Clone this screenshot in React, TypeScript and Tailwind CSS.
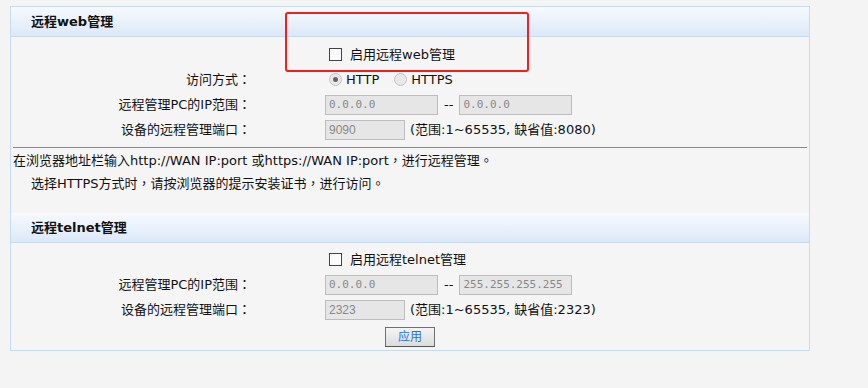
import type { ReactNode } from "react";

const FONT = "font-['DejaVu_Sans','Noto_Sans_CJK_SC',sans-serif]";
const CJK = "font-['Noto_Sans_CJK_TC',sans-serif]";

function Header({ title }: { title: string }) {
  return (
    <div className="flex h-[30px] items-center border-b border-[#c6daf0] bg-gradient-to-b from-[#f7fafe] to-[#dce8f8] pl-[20px]">
      <span className="text-[13px] font-bold text-[#111]">{title}</span>
    </div>
  );
}

// full-width punctuation, centred in its cell as in the original
function P({ c }: { c: string }) {
  return <span className={CJK}>{c}</span>;
}

function Row({ label, children }: { label?: string; children: ReactNode }) {
  return (
    <div className="flex h-[25px] items-center">
      <div className="w-[240px] text-right">
        {label && (
          <>
            {label}
            <P c="：" />
          </>
        )}
      </div>
      <div className="ml-[74px] flex items-center">{children}</div>
    </div>
  );
}

function Checkbox({ text }: { text: string }) {
  return (
    <label className="ml-[4px] flex items-center">
      <span className="h-[13px] w-[13px] border border-[#444] bg-[#fbfbfb]" />
      <span className="ml-[8px]">{text}</span>
    </label>
  );
}

function Radio({ checked, text }: { checked?: boolean; text: string }) {
  return (
    <span className="flex items-center text-[#111]">
      <span className="flex h-[13px] w-[13px] items-center justify-center rounded-full border border-[#c4c4c4] bg-[#e8e8e8]">
        {checked && <span className="h-[5px] w-[5px] rounded-full bg-[#666]" />}
      </span>
      <span className="ml-[4px]">{text}</span>
    </span>
  );
}

function Field({ value, width, mono }: { value: string; width: string; mono?: boolean }) {
  return (
    <div
      className={`${width} flex h-[20px] items-center border border-[#bdbdbd] bg-[#e6e6e6] pl-[3px] text-[#888] ${
        mono ? "font-['DejaVu_Sans_Mono',monospace] text-[11px]" : "font-['Liberation_Sans',sans-serif] text-[12px]"
      }`}
    >
      {value}
    </div>
  );
}

function IpRange({ from, to }: { from: string; to: string }) {
  return (
    <>
      <Field value={from} width="w-[113px]" mono />
      <span className="mx-[6px]">--</span>
      <Field value={to} width="w-[113px]" mono />
    </>
  );
}

export default function App() {
  return (
    <div className={`relative min-h-screen bg-[#f4f4f4] pl-[10px] pt-[6px] text-[13px] leading-[16px] text-[#111] ${FONT}`}>
      <div className="w-[800px] border border-[#c8dcf0] bg-[#f5f5f5]">
        <Header title="远程web管理" />
        <div className="pt-[5px]">
          <Row>
            <Checkbox text="启用远程web管理" />
          </Row>
          <Row label="访问方式">
            <span className="ml-[4px] flex items-center gap-[15px]">
              <Radio checked text="HTTP" />
              <Radio text="HTTPS" />
            </span>
          </Row>
          <Row label="远程管理PC的IP范围">
            <IpRange from="0.0.0.0" to="0.0.0.0" />
          </Row>
          <Row label="设备的远程管理端口">
            <Field value="9090" width="w-[80px]" />
            <span className="ml-[5px]">(范围:1~65535, 缺省值:8080)</span>
          </Row>
        </div>
        <div className="mx-[2px] mt-[5px] border-t border-[#8a8a8a]" />
        <div className="pt-[1px] leading-[22px]">
          <p className="pl-[2px]">
            在浏览器地址栏输入http://WAN IP:port 或https://WAN IP:port<P c="，" />进行远程管理<P c="。" />
          </p>
          <p className="pl-[20px]">
            选择HTTPS方式时<P c="，" />请按浏览器的提示安装证书<P c="，" />进行访问<P c="。" />
          </p>
        </div>
        <div className="mt-[18px]">
          <Header title="远程telnet管理" />
        </div>
        <div className="pt-[4px]">
          <Row>
            <Checkbox text="启用远程telnet管理" />
          </Row>
          <Row label="远程管理PC的IP范围">
            <IpRange from="0.0.0.0" to="255.255.255.255" />
          </Row>
          <Row label="设备的远程管理端口">
            <Field value="2323" width="w-[80px]" />
            <span className="ml-[5px]">(范围:1~65535, 缺省值:2323)</span>
          </Row>
        </div>
        <div className="flex justify-center pb-[3px] pt-[5px]">
          <button className="flex h-[20px] w-[50px] items-center justify-center border border-[#707070] border-b-[#555] bg-gradient-to-b from-[#f4f4f4] to-[#dcdcdc] text-[12px] text-[#1f6fe6]">
            应用
          </button>
        </div>
      </div>
      <div className="absolute left-[285px] top-[12px] h-[60px] w-[244px] rounded-[3px] border-2 border-[#f0201c]" />
    </div>
  );
}
